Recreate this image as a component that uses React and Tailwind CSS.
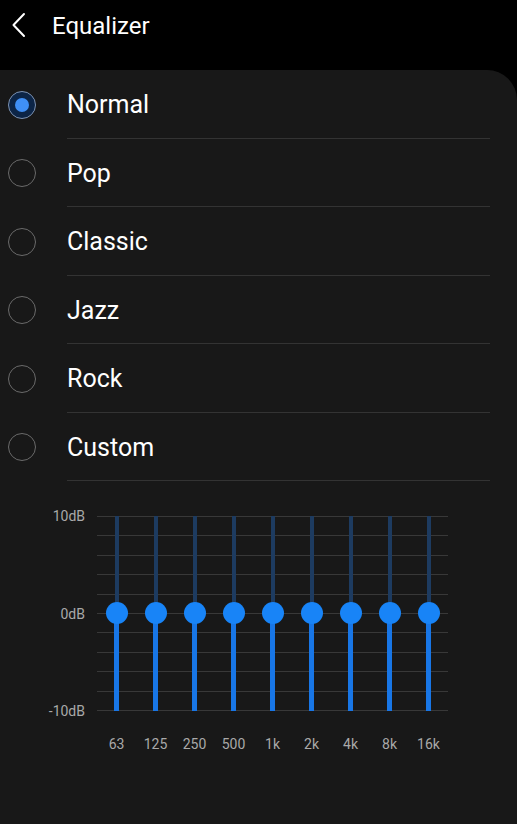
import React from 'react';

const presets = ['Normal', 'Pop', 'Classic', 'Jazz', 'Rock', 'Custom'];
const bands = ['63', '125', '250', '500', '1k', '2k', '4k', '8k', '16k'];
const gridLines = Array.from({ length: 11 }, (_, i) => i);

function Radio({ checked }) {
  if (checked) {
    return (
      <div className="w-[28px] h-[28px] rounded-full border-[1.5px] border-[#7d93b3] bg-[#0c2547] flex items-center justify-center">
        <div className="w-[14px] h-[14px] rounded-full bg-[#3f8ff5]" />
      </div>
    );
  }
  return <div className="w-[28px] h-[28px] rounded-full border-[1.5px] border-[#6a6a6a]" />;
}

function PresetRow({ label, checked }) {
  return (
    <div className="flex items-center h-[68.5px]">
      <div className="w-[67px] pl-[8px] pt-[1px] flex items-center">
        <Radio checked={checked} />
      </div>
      <div className="flex-1 h-full mr-[27px] flex items-center border-b border-[#333333]">
        <span className="text-[25px] text-white leading-none mt-[2px]">{label}</span>
      </div>
    </div>
  );
}

function BandSlider() {
  return (
    <div className="relative w-[39px] h-full flex flex-col items-center">
      <div className="w-[4px] h-[97px] bg-[#1d3b60]" />
      <div className="w-[5px] flex-1 bg-[#1876e6]" />
      <div className="absolute top-[86px] left-[8.5px] w-[22px] h-[22px] rounded-full bg-[#1884f7]" />
    </div>
  );
}

function Chart() {
  return (
    <div className="pt-[35px]">
      <div className="flex items-start">
        <div className="w-[85px] h-[211px] -mt-[8px] flex flex-col justify-between items-end text-[14px] leading-[16px] text-[#a9a9a9]">
          <span>10dB</span>
          <span>0dB</span>
          <span>-10dB</span>
        </div>
        <div className="relative ml-[12px] w-[351px] h-[195px]">
          <div className="absolute inset-0 flex flex-col justify-between">
            {gridLines.map((i) => (
              <div key={i} className="h-px bg-[#383838]" />
            ))}
          </div>
          <div className="absolute inset-0 flex">
            {bands.map((b) => (
              <BandSlider key={b} />
            ))}
          </div>
        </div>
      </div>
      <div className="flex ml-[97px] mt-[17px]">
        {bands.map((b) => (
          <div key={b} className="w-[39px] text-center text-[14px] leading-[16px] text-[#a9a9a9]">
            {b}
          </div>
        ))}
      </div>
    </div>
  );
}

export default function App() {
  return (
    <div
      className="w-[517px] h-[824px] bg-black flex flex-col overflow-hidden"
      style={{ fontFamily: 'Roboto, "Noto Sans", sans-serif' }}
    >
      <div className="h-[70px] flex items-start pt-[11px]">
        <div className="w-[52px] h-[28px] flex items-center pl-[11px]">
          <svg width="16" height="26" viewBox="0 0 16 26" fill="none">
            <path d="M13 2 L2.5 13 L13 24" stroke="#ffffff" strokeWidth="2" strokeLinecap="round" strokeLinejoin="round" />
          </svg>
        </div>
        <span className="text-[24px] leading-[28px] text-white mt-[1px]">Equalizer</span>
      </div>
      <div className="flex-1 bg-[#181818] rounded-tr-[30px]">
        {presets.map((p, i) => (
          <PresetRow key={p} label={p} checked={i === 0} />
        ))}
        <Chart />
      </div>
    </div>
  );
}
